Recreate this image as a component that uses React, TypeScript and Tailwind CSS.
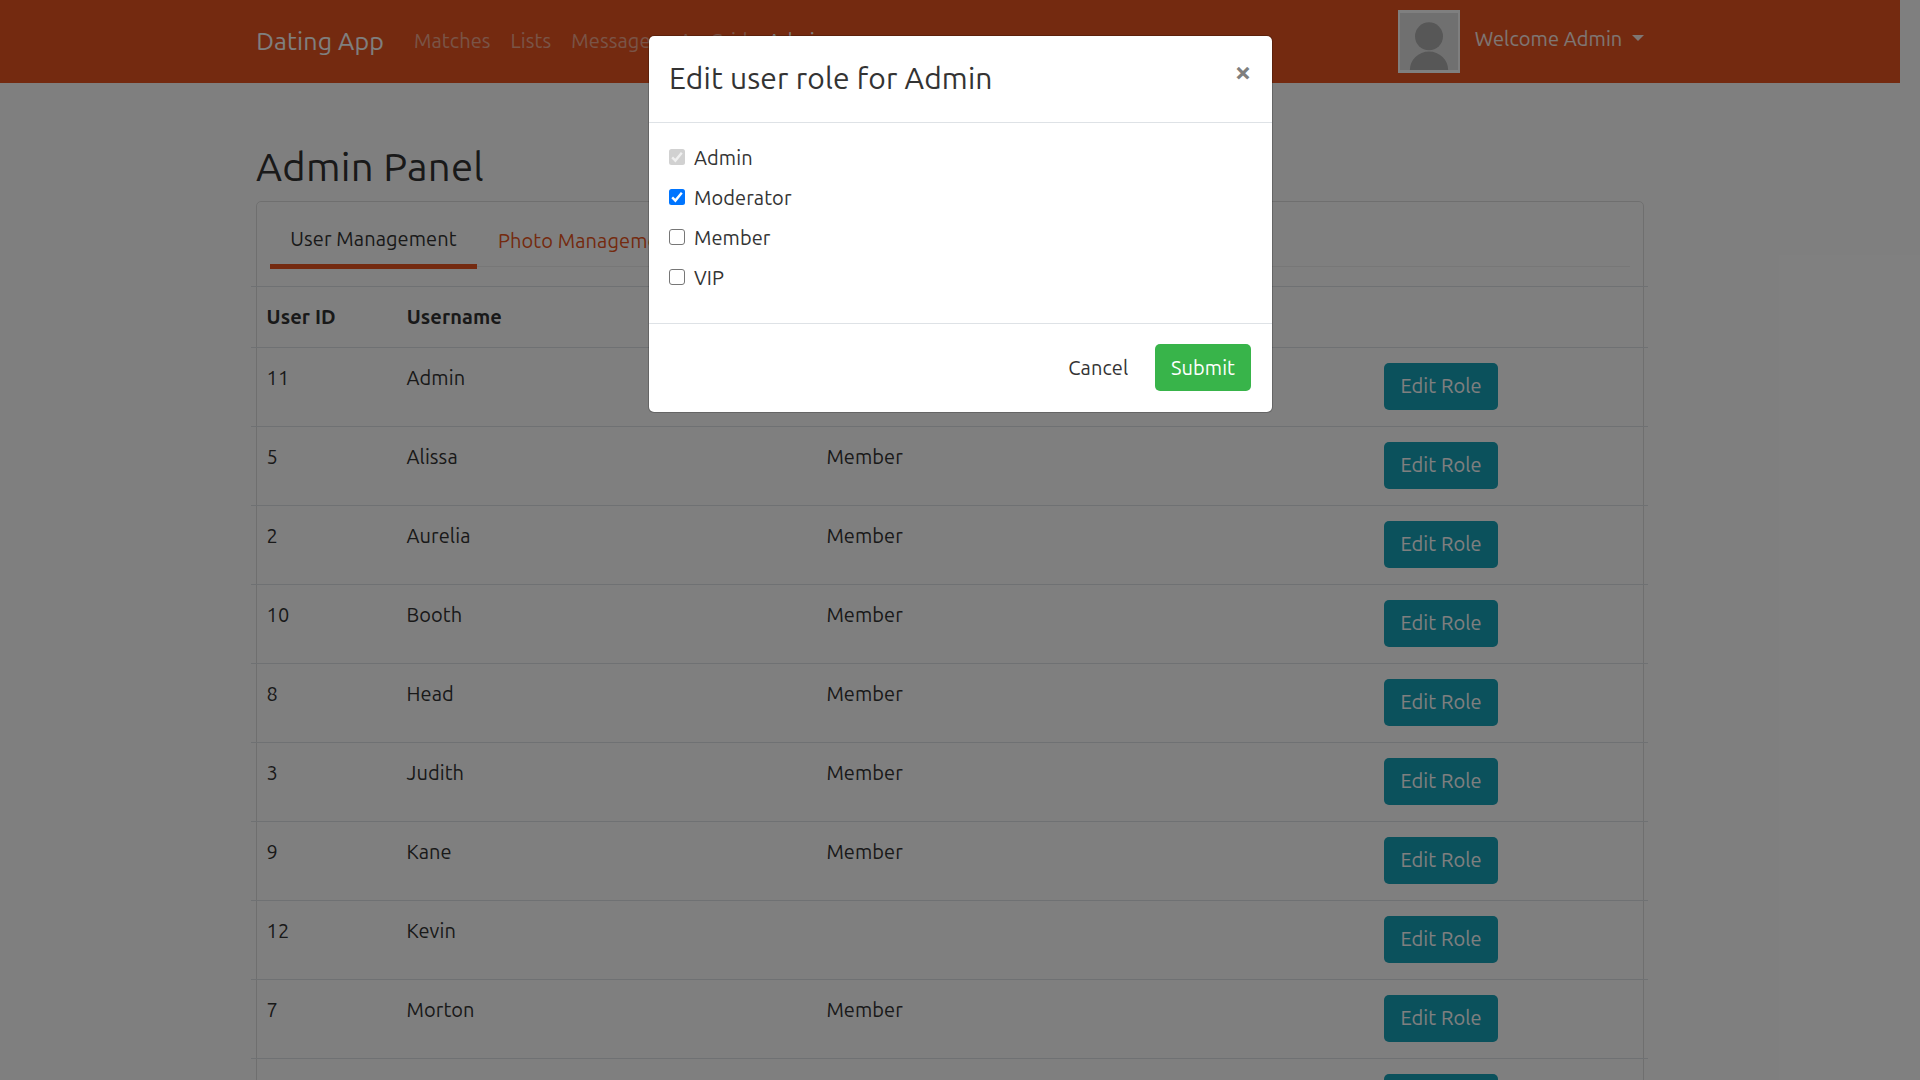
import React from "react";

const users: { id: number; name: string; roles: string }[] = [
  { id: 11, name: "Admin", roles: "Admin,Moderator" },
  { id: 5, name: "Alissa", roles: "Member" },
  { id: 2, name: "Aurelia", roles: "Member" },
  { id: 10, name: "Booth", roles: "Member" },
  { id: 8, name: "Head", roles: "Member" },
  { id: 3, name: "Judith", roles: "Member" },
  { id: 9, name: "Kane", roles: "Member" },
  { id: 12, name: "Kevin", roles: "" },
  { id: 7, name: "Morton", roles: "Member" },
  { id: 4, name: "", roles: "" },
];

const roles = [
  { name: "Admin", checked: true, disabled: true },
  { name: "Moderator", checked: true, disabled: false },
  { name: "Member", checked: false, disabled: false },
  { name: "VIP", checked: false, disabled: false },
];

function Avatar() {
  return (
    <svg className="h-[63px] w-[62px] border-x-2 border-y-[3px] border-white bg-[#e1e1e1]" viewBox="0 0 58 57" preserveAspectRatio="none">
      <circle cx="29" cy="23.3" r="14" fill="#aeaeae" />
      <path d="M9.8 57a19.2 18.5 0 0 1 38.4 0z" fill="#aeaeae" />
    </svg>
  );
}

function Navbar() {
  return (
    <nav className="h-[83px] bg-[#e95420]">
      <div className="mx-auto flex h-full w-[1387.5px] items-center">
        <a className="mr-5 text-[25px] leading-[37.5px] tracking-[0.006em] text-white">Dating App</a>
        <div className="-mt-[2px] flex text-white/50">
          <a className="px-[10px]">Matches</a>
          <a className="px-[10px]">Lists</a>
          <a className="px-[10px]">Messages</a>
          <a className="px-[10px]">Ag-Grid</a>
          <a className="px-[10px] text-white">Admin</a>
        </div>
        <div className="ml-auto flex items-center text-white/90">
          <Avatar />
          <span className="-mt-1.5 ml-[14.6px]">Welcome Admin</span>
          <span className="-mt-2 ml-[9.4px] border-x-[6px] border-t-[6px] border-x-transparent border-t-current" />
        </div>
      </div>
    </nav>
  );
}

function Tabs() {
  return (
    <div className="mx-[13px] flex h-[65px] border-b border-[#efefef] pt-[15px]">
      <div className="h-[52px] w-[207px] border-b-[5px] border-[#e95420] pt-[7px] text-center">User Management</div>
      <div className="px-[21px] pt-[9px] text-[#e95420]">Photo Management</div>
    </div>
  );
}

function UserTable() {
  return (
    <table className="-ml-[6px] mt-[19px] w-[1397px] table-fixed border-collapse text-left">
      <colgroup>
        <col className="w-[10%]" />
        <col className="w-[30%]" />
        <col className="w-[40%]" />
        <col className="w-[20%]" />
      </colgroup>
      <thead>
        <tr className="h-[61px] border-t border-[#dee2e6] align-top">
          <th className="px-[15.6px] pt-[15px] font-bold">User ID</th>
          <th className="px-4 pt-[15px] font-bold">Username</th>
          <th className="px-4 pt-[15px] font-bold">Active roles</th>
          <th />
        </tr>
      </thead>
      <tbody>
        {users.map((u) => (
          <tr key={u.id} className="h-[79px] border-t border-[#dee2e6] align-top">
            <td className="px-[15.6px] pt-[15px]">{u.name && u.id}</td>
            <td className="px-[15.8px] pt-[15px]">{u.name}</td>
            <td className="px-[16.6px] pt-[15px]">{u.roles}</td>
            <td className="px-[15px] pt-[15px]">
              <button className="block h-[47px] w-[114px] rounded-[5px] bg-[#17a2b8] pb-px pl-px text-white">Edit Role</button>
            </td>
          </tr>
        ))}
      </tbody>
    </table>
  );
}

function Checkbox({ checked, disabled }: { checked: boolean; disabled: boolean }) {
  if (!checked) return <span className="h-4 w-4 rounded-[3px] border border-[#767676] bg-white" />;
  return (
    <svg className="h-4 w-4" viewBox="0 0 16 16">
      <rect width="16" height="16" rx="2.5" fill={disabled ? "#d1d1d1" : "#0075ff"} />
      <path d="M3.2 8.4 6.4 11.6 12.8 3.8" fill="none" stroke={disabled ? "#f0f0f0" : "#fff"} strokeWidth="2.4" />
    </svg>
  );
}

function RoleModal() {
  return (
    <div className="absolute left-[648px] top-[35px] w-[625px] rounded-[6px] border border-black/20 bg-white bg-clip-padding">
      <div className="flex h-[87px] justify-between border-b border-[#dee2e6] p-5">
        <h4 className="text-[30px] leading-[45px] tracking-[0.0055em]">Edit user role for Admin</h4>
        <button className="mr-[0.5px] h-[30px] text-[30px] font-bold leading-[30px] text-black/50">×</button>
      </div>
      <div className="p-5">
        {roles.map((r) => (
          <div key={r.name} className="flex h-10 items-start">
            <span className="flex pt-[6px]">
              <Checkbox checked={r.checked} disabled={r.disabled} />
            </span>
            <span className="ml-[9px]">{r.name}</span>
          </div>
        ))}
      </div>
      <div className="flex h-[89px] justify-end gap-[10px] border-t border-[#dee2e6] py-5 pl-5 pr-[21px]">
        <button className="h-[47px] w-[92px] pr-[1.5px]">Cancel</button>
        <button className="h-[47px] w-[96px] rounded-[5px] bg-[#38b44a] text-white">Submit</button>
      </div>
    </div>
  );
}

export default function App() {
  return (
    <div className="relative h-[1080px] w-[1920px] overflow-hidden bg-white font-[Ubuntu,'Noto_Sans',sans-serif] text-[20px] leading-[30px] tracking-[0.0045em] text-[#333]">
      <div className="w-[1900px]">
        <Navbar />
        <main className="mx-auto w-[1388px] pt-[60px]">
          <h1 className="h-[58px] text-[40px] leading-[48px] tracking-[0.0065em]">Admin Panel</h1>
          <div className="h-[1000px] rounded-[5px] border border-[#dfdfdf]">
            <Tabs />
            <UserTable />
          </div>
        </main>
      </div>
      <div className="absolute inset-0 bg-black/50" />
      <RoleModal />
    </div>
  );
}
